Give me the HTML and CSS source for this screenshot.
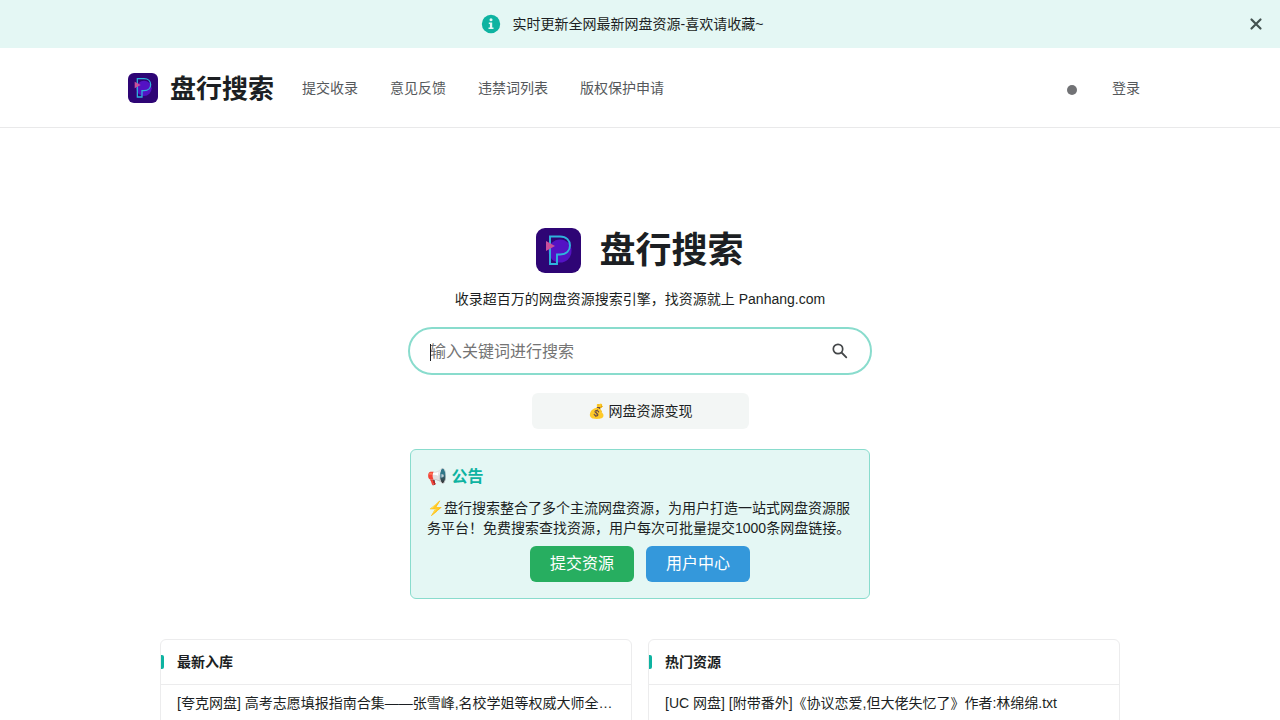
FILE: index.html
```
<!DOCTYPE html>
<html lang="zh-CN">
<head>
  <meta charset="UTF-8" />
  <meta name="viewport" content="width=device-width, initial-scale=1.0" />
  <title>盘行搜索</title>
  <link rel="stylesheet" href="styles.css">
</head>
<body>
  <!-- shared logo -->
  <svg class="sprite" aria-hidden="true">
    <symbol id="logo" viewBox="0 0 45 45">
      <rect width="45" height="45" rx="9" fill="#2e0575"/>
      <circle cx="24" cy="23" r="11.5" fill="#5412c4"/>
      <path d="M14 8.500H24C30.500 8.500 34 12.500 34 17.500C34 22.500 30.500 26.500 24 26.500H21V36H14V8.500Z" fill="none" stroke="#2fb3dc" stroke-width="1.900"/>
      <path d="M10 13L19 18L10 23Z" fill="#c8509c"/>
    </symbol>
  </svg>

  <div class="banner">
    <div class="banner-text">
      <svg width="20" height="20" viewBox="0 0 20 20" aria-hidden="true">
        <circle cx="10" cy="10" r="9.200" fill="#0eb3a1"/>
        <circle cx="10" cy="5.800" r="1.500" fill="#e4f7f4"/>
        <path d="M7.800 8.400H11.200V13.400H12.500V15H7.500V13.400H8.900V10H7.800Z" fill="#e4f7f4"/>
      </svg>
      <span>实时更新全网最新网盘资源-喜欢请收藏~</span>
    </div>
    <button class="close" type="button" aria-label="关闭">
      <svg width="16" height="16" viewBox="0 0 16 16" aria-hidden="true">
        <path d="M3.500 3.500L12.500 12.500M12.500 3.500L3.500 12.500" stroke="#445250" stroke-width="2.200" stroke-linecap="round"/>
      </svg>
    </button>
  </div>

  <header>
    <div class="header-inner">
      <a class="brand" href="#">
        <svg width="30" height="30"><use href="#logo"/></svg>
        <span>盘行搜索</span>
      </a>
      <nav>
        <a href="#">提交收录</a>
        <a href="#">意见反馈</a>
        <a href="#">违禁词列表</a>
        <a href="#">版权保护申请</a>
      </nav>
      <div class="user">
        <button class="theme" type="button" aria-label="切换主题"><i></i></button>
        <a href="#">登录</a>
      </div>
    </div>
  </header>

  <main>
    <h1 class="title">
      <svg width="45" height="45" aria-hidden="true"><use href="#logo"/></svg>
      <span>盘行搜索</span>
    </h1>
    <p class="subtitle">收录超百万的网盘资源搜索引擎，找资源就上 Panhang.com</p>

    <form class="search">
      <input type="text" placeholder="输入关键词进行搜索" aria-label="搜索">
      <button type="button" aria-label="搜索">
        <svg width="16" height="16" viewBox="0 0 16 16" aria-hidden="true">
          <circle cx="6" cy="6" r="4.700" fill="none" stroke="#444749" stroke-width="1.700"/>
          <path d="M9.500 9.500L14.300 14.300" stroke="#444749" stroke-width="1.800" stroke-linecap="round"/>
        </svg>
      </button>
    </form>

    <button class="promo" type="button">💰 网盘资源变现</button>

    <section class="notice">
      <h2>📢 公告</h2>
      <p>⚡盘行搜索整合了多个主流网盘资源，为用户打造一站式网盘资源服务平台！免费搜索查找资源，用户每次可批量提交1000条网盘链接。</p>
      <div class="actions">
        <button class="green" type="button">提交资源</button>
        <button class="blue" type="button">用户中心</button>
      </div>
    </section>

    <div class="cards">
      <section class="card">
        <h3>最新入库</h3>
        <ul>
          <li><a href="#">[夸克网盘] 高考志愿填报指南合集——张雪峰,名校学姐等权威大师全套课程</a></li>
        </ul>
      </section>
      <section class="card">
        <h3>热门资源</h3>
        <ul>
          <li><a href="#">[UC 网盘] [附带番外]《协议恋爱,但大佬失忆了》作者:林绵绵.txt</a></li>
        </ul>
      </section>
    </div>
  </main>
</body>
</html>
```
FILE: styles.css
```
* { box-sizing: border-box; margin: 0; padding: 0; }

body {
  font-family: "Liberation Sans", "Noto Sans CJK SC", sans-serif;
  font-size: 14px;
  line-height: 20px;
  color: #1c1f23;
  background: #fff;
  height: 100vh;
  overflow: hidden;
}

a { color: inherit; text-decoration: none; }

button, input {
  font: inherit;
  color: inherit;
  border: none;
  background: none;
}

button { cursor: pointer; }

svg { display: block; flex-shrink: 0; }

.sprite {
  position: absolute;
  width: 0;
  height: 0;
}

.banner {
  display: flex;
  align-items: center;
  height: 48px;
  padding: 0 12px 0 0;
  background: #e4f7f4;
}

.banner-text {
  flex: 1;
  display: flex;
  align-items: center;
  justify-content: center;
  gap: 12px;
}

.close { padding: 4px; }

header { border-bottom: 1px solid #e9e9ea; }

.header-inner {
  display: flex;
  align-items: center;
  max-width: 1024px;
  height: 79px;
  margin: 0 auto;
}

.brand {
  display: flex;
  align-items: center;
  gap: 12px;
  margin-right: 28px;
  font-size: 26px;
  line-height: 36px;
  font-weight: 600;
}

.brand span, .title span { padding-top: 2px; }

nav {
  display: flex;
  gap: 32px;
  color: #55585b;
}

.user {
  display: flex;
  align-items: center;
  gap: 35px;
  margin-left: auto;
  padding-right: 12px;
  color: #55585b;
}

.theme { padding: 4px 0 0; }

.theme i {
  display: block;
  width: 10px;
  height: 10px;
  border-radius: 50%;
  background: #717275;
}

main {
  display: flex;
  flex-direction: column;
  align-items: center;
  padding: 98px 20px 0;
}

.title {
  display: flex;
  align-items: center;
  gap: 18px;
  font-size: 36px;
  line-height: 46px;
  font-weight: 600;
}

.subtitle { margin: 15px 0 18px; }

.search {
  position: relative;
  display: flex;
  align-items: center;
  width: 100%;
  max-width: 464px;
  height: 48px;
  padding: 0 20px;
  border: 2px solid #89dccd;
  border-radius: 24px;
}

/* text caret */
.search::before {
  content: "";
  position: absolute;
  top: 15px;
  left: 20px;
  width: 1px;
  height: 17px;
  background: #1c1f23;
}

.search input {
  flex: 1;
  min-width: 0;
  padding-top: 2px;
  font-size: 16px;
  line-height: 24px;
  outline: none;
}

.search input::placeholder { color: #747474; }

.search button { padding: 2px; }

.promo {
  width: 100%;
  max-width: 217px;
  height: 36px;
  margin: 18px 0 20px;
  border-radius: 6px;
  background: #f3f6f5;
}

.notice {
  width: 100%;
  max-width: 460px;
  padding: 15px 16px 16px;
  border: 1px solid #89dccd;
  border-radius: 6px;
  background: #e4f7f4;
}

.notice h2 {
  margin-bottom: 9px;
  font-size: 16px;
  line-height: 24px;
  font-weight: 600;
  color: #0eb3a1;
}

.actions {
  display: flex;
  justify-content: center;
  gap: 12px;
  margin-top: 8px;
}

.actions button {
  width: 104px;
  height: 36px;
  border-radius: 6px;
  font-size: 16px;
  color: #fff;
}

.green { background: #27ae60; }
.blue { background: #3498db; }

.cards {
  display: grid;
  grid-template-columns: 1fr 1fr;
  gap: 16px;
  width: 100%;
  max-width: 960px;
  margin-top: 40px;
}

.card {
  min-width: 0;
  min-height: 400px;
  border: 1px solid #ececed;
  border-radius: 6px;
}

.card h3 {
  display: flex;
  align-items: center;
  height: 45px;
  border-bottom: 1px solid #ececed;
  font-size: 14px;
  font-weight: 600;
}

.card h3::before {
  content: "";
  width: 3px;
  height: 14px;
  margin-right: 13px;
  border-radius: 0 2px 2px 0;
  background: #0eb3a1;
}

.card ul {
  padding: 8px 16px;
  list-style: none;
}

.card li {
  overflow: hidden;
  text-overflow: ellipsis;
  white-space: nowrap;
}
```
